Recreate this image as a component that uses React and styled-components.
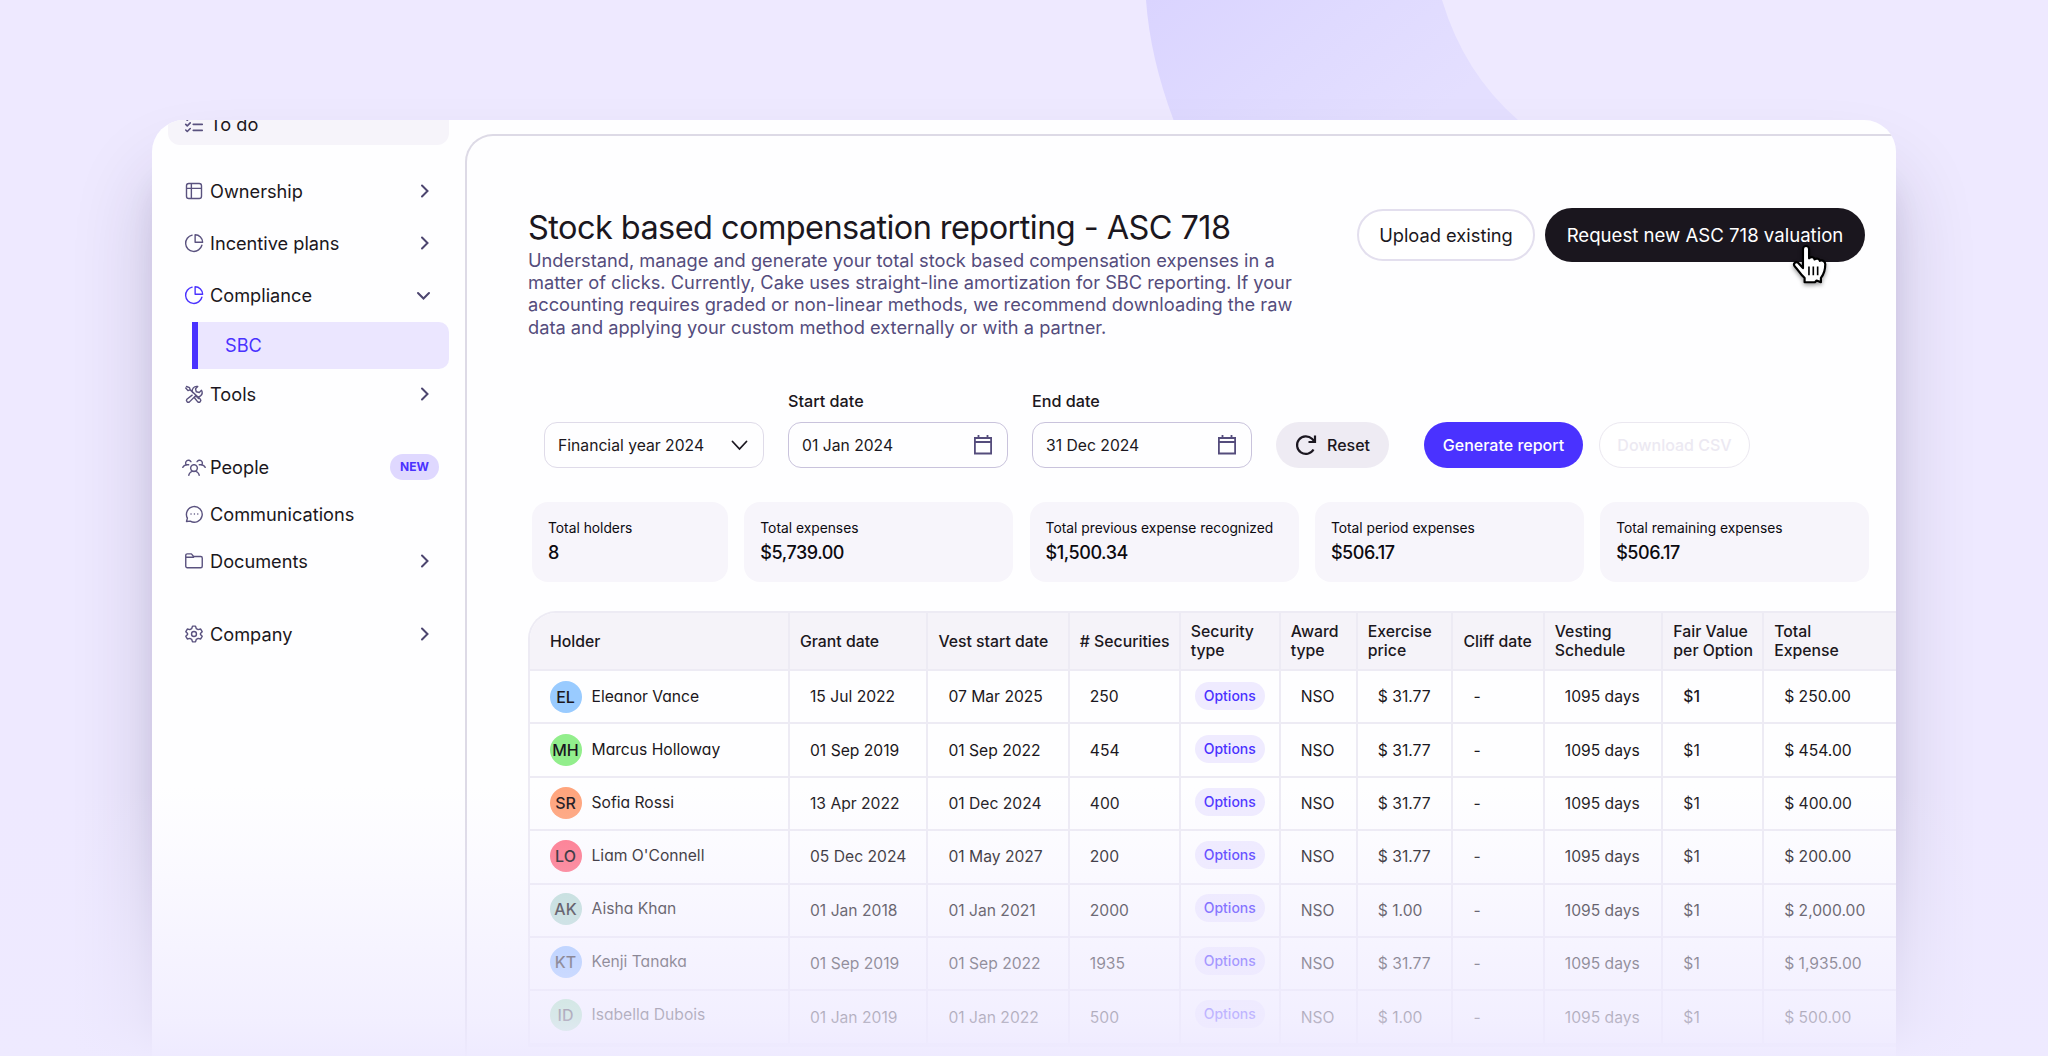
import React from 'react';
import styled, { createGlobalStyle } from 'styled-components';

const GlobalStyle = createGlobalStyle`
  * {
    box-sizing: border-box;
  }
  body {
    margin: 0;
    background: #eee9ff;
    font-family: Inter, 'Liberation Sans', sans-serif;
    color: #1b1720;
  }
`;

const Page = styled.div`
  position: relative;
  width: 2048px;
  height: 1056px;
  overflow: hidden;
  padding: 120px 152px 0;
  background: #eee9ff;
`;

const Swoosh = styled.svg`
  position: absolute;
  top: 0;
  left: 0;
`;

const Card = styled.div`
  position: relative;
  height: 1100px;
  border-radius: 32px;
  box-shadow: 0 56px 80px rgba(40, 30, 80, 0.19), 0 56px 28px rgba(40, 30, 80, 0.07);
`;

const CardBody = styled.div`
  display: flex;
  height: 100%;
  border-radius: 32px;
  background: #fefeff;
  overflow: hidden;
`;

const Fade = styled.div`
  position: absolute;
  left: 0;
  right: 0;
  bottom: 0;
  height: 270px;
  background: linear-gradient(
    rgba(238, 234, 255, 0),
    rgba(238, 234, 255, 0.2) 28%,
    rgba(238, 234, 255, 0.56) 66%,
    rgba(238, 234, 255, 0.73) 86%,
    rgba(238, 234, 255, 0.97)
  );
`;

const Sidebar = styled.nav`
  display: flex;
  flex-direction: column;
  width: 313px;
  padding: 0 16px;
`;

const NavItem = styled.div`
  display: flex;
  align-items: center;
  height: ${p => p.$height || 52}px;
  margin-top: ${p => p.$gap || 0}px;
  padding: 0 18px 1px 14px;
  font-size: 18.2px;

  svg {
    flex: none;
    overflow: visible;
  }
`;

const TodoItem = styled(NavItem)`
  height: 45px;
  margin-top: -20px;
  padding-top: 3px;
  border-radius: 12px;
  background: #f6f4fa;
`;

const NavIcon = styled.span`
  display: flex;
  justify-content: center;
  width: 24px;
  margin-right: 4px;
  color: ${p => (p.$active ? '#4a32ff' : '#5a527f')};
`;

const NavLabel = styled.span`
  flex: 1;
`;

const SubItem = styled.div`
  height: 47px;
  margin-left: 24px;
  padding-left: 27px;
  border-left: 6px solid #4a32ff;
  border-radius: 0 10px 10px 0;
  background: #ebe6ff;
  color: #4a32ff;
  font-size: 18.2px;
  line-height: 47px;
`;

const NewBadge = styled.span`
  margin-right: -8px;
  padding: 0 10px;
  border-radius: 13px;
  background: #dfd8ff;
  color: #4a32ff;
  font-size: 12px;
  font-weight: 700;
  line-height: 26px;
`;

const Main = styled.main`
  flex: 1;
  min-width: 0;
  margin-top: 14px;
  padding: 72px 0 0 61px;
  border: 2px solid #dddae6;
  border-right: 0;
  border-bottom: 0;
  border-top-left-radius: 28px;
`;

const Header = styled.header`
  display: flex;
  justify-content: space-between;
  align-items: flex-start;
  height: 214px;
  padding-right: 31px;
`;

const Title = styled.h1`
  margin: 1px 0 0;
  font-size: 32.5px;
  font-weight: 400;
  letter-spacing: -0.57px;
  line-height: 38px;
  white-space: nowrap;
`;

const Description = styled.p`
  width: 790px;
  margin: 2px 0 0;
  color: #544c7c;
  font-size: 18.25px;
  line-height: 22.2px;
  white-space: nowrap;
`;

const Actions = styled.div`
  display: flex;
  align-items: center;
  gap: 10px;
`;

const Button = styled.button`
  display: flex;
  align-items: center;
  justify-content: center;
  gap: 10px;
  width: ${p => p.$width}px;
  height: 46px;
  padding: 0;
  border: 0;
  border-radius: 27px;
  background: #eeebf3;
  color: #1b1720;
  font-family: inherit;
  font-size: 16px;
  font-weight: 500;
  white-space: nowrap;
`;

const UploadButton = styled(Button)`
  height: 52px;
  border: 2px solid #e3dfee;
  background: #fff;
  font-size: 18.3px;
  font-weight: 400;
`;

const RequestButton = styled(Button)`
  position: relative;
  height: 54px;
  background: #1a161e;
  color: #fff;
  font-size: 18.6px;
  font-weight: 400;
`;

const Cursor = styled.svg`
  position: absolute;
  left: 246px;
  top: 34px;
  overflow: visible;
  filter: drop-shadow(0 2px 2px rgba(0, 0, 0, 0.4));
`;

const GenerateButton = styled(Button)`
  margin-left: 35px;
  background: #4a32ff;
  color: #fff;
`;

const DownloadButton = styled(Button)`
  margin-left: 16px;
  border: 1.5px solid #ebe8f0;
  background: #fff;
  color: #ece9f2;
`;

const Filters = styled.div`
  display: flex;
  align-items: flex-end;
  height: 46px;
  padding-left: 16px;
`;

const Field = styled.div`
  width: 220px;
  margin-right: 24px;
  font-size: 15.7px;
`;

const FieldLabel = styled.div`
  margin-bottom: 11px;
  font-size: 16.2px;
  font-weight: 500;
  line-height: 20px;
`;

const Input = styled.div`
  display: flex;
  align-items: center;
  justify-content: space-between;
  height: 46px;
  padding: 0 14px 0 13px;
  border: 1.5px solid ${p => (p.$soft ? '#dfdbe9' : '#c9c3dc')};
  border-radius: 13px;
`;

const Stats = styled.div`
  display: flex;
  gap: 16.3px;
  margin: 34px 0 29px 4px;
`;

const Stat = styled.div`
  flex: none;
  width: ${p => p.$width}px;
  height: 80px;
  padding: 16px 16px 0;
  border-radius: 16px;
  background: #f7f5fb;
`;

const StatLabel = styled.div`
  color: #0c0a10;
  font-size: 13.8px;
  line-height: 20px;
  white-space: nowrap;
`;

const StatValue = styled.div`
  color: #0c0a10;
  font-size: 18px;
  font-weight: 500;
  letter-spacing: -0.45px;
  line-height: 30px;
`;

const columns = '260px 138.4px 141.4px 111px 100px 77px 95.7px 91.3px 118.6px 100.8px 1fr';

const Table = styled.div`
  border: 2px solid #edebf4;
  border-right: 0;
  border-radius: 28px 0 0 0;
  overflow: hidden;
`;

const HeadRow = styled.div`
  display: grid;
  grid-template-columns: ${columns};
  height: 58px;
  border-bottom: 2px solid #edebf4;
  background: #f5f3f9;
`;

const HeadCell = styled.div`
  display: flex;
  align-items: center;
  padding-left: ${p => (p.$first ? 20 : 10)}px;
  border-right: 2px solid #edebf4;
  font-size: 15.8px;
  font-weight: 500;
  line-height: 19px;
  white-space: pre;

  &:last-child {
    border-right: 0;
  }
`;

const Row = styled.div`
  display: grid;
  grid-template-columns: ${columns};
  height: 53.4px;
  border-bottom: 2px solid #edebf4;
`;

const Cell = styled.div`
  display: flex;
  align-items: center;
  padding-left: 20px;
  border-right: 2px solid #edebf4;
  font-size: 15.65px;
  font-weight: ${p => (p.$strong ? 500 : 400)};
  white-space: nowrap;

  &:last-child {
    border-right: 0;
  }
`;

const HolderCell = styled(Cell)`
  gap: 10px;
  padding-left: 19.5px;
  padding-bottom: ${p => p.$row * 0.8}px;
  font-feature-settings: 'cv11';
`;

const PillCell = styled(Cell)`
  padding-left: 14px;
  padding-bottom: ${p => 2 + p.$row * 0.8}px;
`;

const Avatar = styled.span`
  display: flex;
  align-items: center;
  justify-content: center;
  width: 32px;
  height: 32px;
  border-radius: 50%;
  background: ${p => p.$color};
  font-size: 16px;
  font-weight: 500;
`;

const Pill = styled.span`
  width: 70px;
  border-radius: 14px;
  background: #efebff;
  color: #4a32ff;
  font-size: 14px;
  font-weight: 500;
  line-height: 28px;
  text-align: center;
`;

const Glyph = ({ size = 18, width = 1.6, children }) => (
  <svg
    width={size}
    height={size}
    viewBox="0 0 24 24"
    fill="none"
    stroke="currentColor"
    strokeWidth={(width * 24) / size}
    strokeLinecap="round"
    strokeLinejoin="round"
  >
    {children}
  </svg>
);

const icons = {
  todo: <path d="M1 5l2 2 4-4M1 12.500l2 2 4-4M1 20l2 2 4-4M11 5.500h12M11 12.500h12M11 20.500h12" />,
  grid: <path d="M5 2h14a3 3 0 0 1 3 3v14a3 3 0 0 1-3 3H5a3 3 0 0 1-3-3V5a3 3 0 0 1 3-3zM2 8.500h20M8.500 2v20" />,
  pie: <path d="M9.500 1.500A11 11 0 1 0 22.500 15M13.500 1v10h10A10 10 0 0 0 13.500 1z" />,
  tools: (
    <path d="M2 2l4 1.500 1 3L20.500 19a2.500 2.500 0 0 1-3.500 3.500L12.500 17M6.500 6.500L4 7.500 1 4M9.500 13.500l-7 5.500A2.500 2.500 0 0 0 6 22.500L13.500 15a6 6 0 0 0 8.500-8l-3 3-4-1-1-4 3-3a6 6 0 0 0-7 8M17 17l1 1" />
  ),
  people: (
    <path d="M12 9a4.500 4.500 0 1 0 .01 0M5 23a7.200 7.200 0 0 1 14 0M2 9.500A3.800 3.800 0 1 1 8 5M-3 12.500a6 6 0 0 1 5-3.500h3M22 9.500A3.800 3.800 0 1 0 16 5M27 12.500a6 6 0 0 0-5-3.500h-3" />
  ),
  chat: <path d="M2 22l1.200-4.500A10.500 10.500 0 1 1 7 21.500zM8 12h.1M12.500 12h.1M17 12h.1" />,
  folder: <path d="M1 19V4.500a2 2 0 0 1 2-2h5.500l3 3.500h9.500a2 2 0 0 1 2 2v11a2 2 0 0 1-2 2H3a2 2 0 0 1-2-2zM1 7h10.500" />,
  gear: (
    <>
      <path d="M10 1.500h4l1 3.200 2.600 1.500 3.300-.8 2 3.500-2.300 2.500v1.200l2.300 2.500-2 3.500-3.300-.8L15 19.300l-1 3.200h-4l-1-3.200-2.600-1.500-3.300.8-2-3.500 2.300-2.500v-1.200L1.100 8.900l2-3.500 3.300.8L9 4.700z" />
      <circle cx="12" cy="12" r="3.300" />
    </>
  )
};

const Chevron = ({ down }) => (
  <svg width="14" height="14" viewBox="0 0 14 14" fill="none" stroke="#4c456f" strokeWidth="2" strokeLinecap="round">
    {down ? <path d="M1 5l5.500 5.500L12 5" /> : <path d="M5 1.500L10.500 7 5 12.500" />}
  </svg>
);

const NavLink = ({ icon, label, active, open, height, gap, badge, plain }) => (
  <NavItem $height={height} $gap={gap}>
    <NavIcon $active={active}>
      <Glyph width={1.4}>{icons[icon]}</Glyph>
    </NavIcon>
    <NavLabel>{label}</NavLabel>
    {badge && <NewBadge>{badge}</NewBadge>}
    {!badge && !plain && <Chevron down={open} />}
  </NavItem>
);

const CalendarIcon = () => (
  <svg width="20" height="20" viewBox="0 0 20 20" fill="none" stroke="#544c7c" strokeWidth="1.8">
    <path d="M1.900 3h16.200v15.500H1.900zM1.900 7h16.200M5.500 0v4M14.500 0v4" />
  </svg>
);

const stats = [
  { label: 'Total holders', value: '8', width: 196 },
  { label: 'Total expenses', value: '$5,739.00', width: 269 },
  { label: 'Total previous expense recognized', value: '$1,500.34', width: 269 },
  { label: 'Total period expenses', value: '$506.17', width: 269 },
  { label: 'Total remaining expenses', value: '$506.17', width: 269 }
];

const heads = [
  'Holder',
  'Grant date',
  'Vest start date',
  '# Securities',
  'Security\ntype',
  'Award\ntype',
  'Exercise\nprice',
  'Cliff date',
  'Vesting\nSchedule',
  'Fair Value\nper Option',
  'Total\nExpense'
];

const holders = [
  ['EL', '#99cbff', 'Eleanor Vance', '15 Jul 2022', '07 Mar 2025', '250', '$ 31.77', '$ 250.00'],
  ['MH', '#92ee8c', 'Marcus Holloway', '01 Sep 2019', '01 Sep 2022', '454', '$ 31.77', '$ 454.00'],
  ['SR', '#ffa47c', 'Sofia Rossi', '13 Apr 2022', '01 Dec 2024', '400', '$ 31.77', '$ 400.00'],
  ['LO', '#ff7488', "Liam O'Connell", '05 Dec 2024', '01 May 2027', '200', '$ 31.77', '$ 200.00'],
  ['AK', '#b9ddd4', 'Aisha Khan', '01 Jan 2018', '01 Jan 2021', '2000', '$ 1.00', '$ 2,000.00'],
  ['KT', '#94c0ff', 'Kenji Tanaka', '01 Sep 2019', '01 Sep 2022', '1935', '$ 31.77', '$ 1,935.00'],
  ['ID', '#9fe3b2', 'Isabella Dubois', '01 Jan 2019', '01 Jan 2022', '500', '$ 1.00', '$ 500.00']
];

const HolderRow = ({ holder, index }) => {
  const [initials, color, name, grant, vest, amount, price, total] = holder;

  return (
    <Row>
      <HolderCell $row={index}>
        <Avatar $color={color}>{initials}</Avatar>
        {name}
      </HolderCell>
      <Cell>{grant}</Cell>
      <Cell>{vest}</Cell>
      <Cell>{amount}</Cell>
      <PillCell $row={index}>
        <Pill>Options</Pill>
      </PillCell>
      <Cell>NSO</Cell>
      <Cell>{price}</Cell>
      <Cell>-</Cell>
      <Cell>1095 days</Cell>
      <Cell $strong={index === 0}>$1</Cell>
      <Cell>{total}</Cell>
    </Row>
  );
};

export default function App() {
  return (
    <Page>
      <GlobalStyle />
      <Swoosh width="2048" height="120">
        <defs>
          <linearGradient id="swoosh" x1="0" y1="0" x2="1" y2="0.4">
            <stop offset="0" stopColor="#dad4ff" />
            <stop offset="0.5" stopColor="#dfdaff" />
            <stop offset="1" stopColor="#e4dfff" />
          </linearGradient>
        </defs>
        <path d="M1146 0Q1150 57 1173.500 120H1518Q1464 73 1442 0z" fill="url(#swoosh)" />
      </Swoosh>

      <Card>
        <CardBody>
          <Sidebar>
            <TodoItem>
              <NavIcon>
                <Glyph width={1.6}>{icons.todo}</Glyph>
              </NavIcon>
              <NavLabel>To do</NavLabel>
            </TodoItem>
            <NavLink icon="grid" label="Ownership" gap={20.5} />
            <NavLink icon="pie" label="Incentive plans" />
            <NavLink icon="pie" label="Compliance" active open />
            <SubItem>SBC</SubItem>
            <NavLink icon="tools" label="Tools" />
            <NavLink icon="people" label="People" badge="NEW" height={47} gap={23.5} />
            <NavLink icon="chat" label="Communications" height={47} plain />
            <NavLink icon="folder" label="Documents" height={47} />
            <NavLink icon="gear" label="Company" height={47} gap={26} />
          </Sidebar>

          <Main>
            <Header>
              <div>
                <Title>Stock based compensation reporting - ASC 718</Title>
                <Description>
                  Understand, manage and generate your total stock based compensation expenses in a
                  <br />
                  matter of clicks. Currently, Cake uses straight-line amortization for SBC reporting. If your
                  <br />
                  accounting requires graded or non-linear methods, we recommend downloading the raw
                  <br />
                  data and applying your custom method externally or with a partner.
                </Description>
              </div>
              <Actions>
                <UploadButton $width={178}>Upload existing</UploadButton>
                <RequestButton $width={320}>
                  Request new ASC 718 valuation
                  <Cursor width="37" height="43.5" viewBox="0 0 34 40">
                    <path
                      d="M11 24V6.500a2.800 2.800 0 0 1 5.600 0V15c2-2 4.800-1 5 1 2-1.500 4.600-.6 4.900 1.300 2.500-1 5 .4 5 3.200 0 6-1.500 9.500-4 12.500V37l-4-1.500-1.500 1.500H12.500v-4C8.500 30 7 26 3.500 22.500c-2-2.500.5-5 3-3.500z"
                      fill="#fff"
                      stroke="#000"
                      strokeWidth="2"
                      strokeLinejoin="round"
                    />
                    <path d="M16.500 22.500v8M20.500 22.500v8M24.500 22.500v8" stroke="#000" strokeWidth="1.500" />
                  </Cursor>
                </RequestButton>
              </Actions>
            </Header>

            <Filters>
              <Field>
                <Input $soft>
                  Financial year 2024
                  <svg width="18" height="12" viewBox="0 0 18 12" fill="none" stroke="#1b1720" strokeWidth="1.8">
                    <path d="M1.500 2.500L8.500 10 15.500 2.500" strokeLinecap="round" />
                  </svg>
                </Input>
              </Field>
              <Field>
                <FieldLabel>Start date</FieldLabel>
                <Input>
                  01 Jan 2024
                  <CalendarIcon />
                </Input>
              </Field>
              <Field>
                <FieldLabel>End date</FieldLabel>
                <Input>
                  31 Dec 2024
                  <CalendarIcon />
                </Input>
              </Field>
              <Button $width={113}>
                <svg width="22" height="22" viewBox="0 0 22 22" fill="none" stroke="#1b1720" strokeWidth="2.2">
                  <path d="M18.500 15.500A8.800 8.800 0 1 1 17 4.800L19.500 7.500M20 1.500V8h-6.500" />
                </svg>
                Reset
              </Button>
              <GenerateButton $width={159}>Generate report</GenerateButton>
              <DownloadButton $width={151}>Download CSV</DownloadButton>
            </Filters>

            <Stats>
              {stats.map(stat => (
                <Stat key={stat.label} $width={stat.width}>
                  <StatLabel>{stat.label}</StatLabel>
                  <StatValue>{stat.value}</StatValue>
                </Stat>
              ))}
            </Stats>

            <Table>
              <HeadRow>
                {heads.map((head, i) => (
                  <HeadCell key={head} $first={i === 0}>
                    {head}
                  </HeadCell>
                ))}
              </HeadRow>
              {holders.map((holder, i) => (
                <HolderRow key={holder[0]} holder={holder} index={i} />
              ))}
            </Table>
          </Main>
        </CardBody>
      </Card>
      <Fade />
    </Page>
  );
}
